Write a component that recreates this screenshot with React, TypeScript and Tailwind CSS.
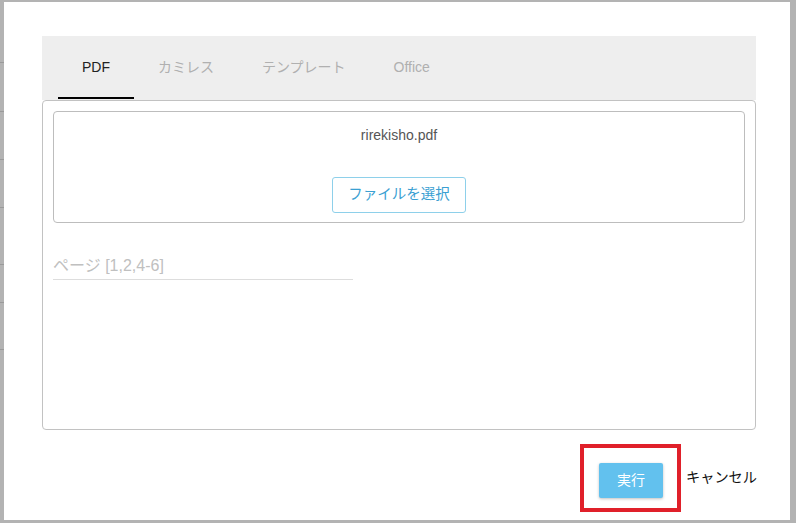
import React from "react";

const font = { fontFamily: '"Liberation Sans", "Noto Sans CJK JP", sans-serif' };

export default function App() {
  const tabs = [
    { label: "PDF", active: true },
    { label: "カミレス", active: false },
    { label: "テンプレート", active: false },
    { label: "Office", active: false },
  ];
  return (
    <div
      className="w-[796px] h-[523px] bg-[#b3b3b3] flex pt-[2px] pb-[3px]"
      style={font}
    >
      <div className="w-[4px] flex flex-col">
        <div className="h-[61px] border-b border-[#9a9a9a]" />
        <div className="h-[49px] border-b border-[#9a9a9a]" />
        <div className="h-[48px] border-b border-[#9a9a9a]" />
        <div className="h-[48px] border-b border-[#9a9a9a]" />
        <div className="h-[57px] border-b border-[#9a9a9a]" />
        <div className="h-[38px] border-b border-[#9a9a9a]" />
        <div className="h-[47px] border-b border-[#9a9a9a]" />
      </div>
      <div className="w-[786px] h-full bg-white pl-[38px] pr-[34px] pt-[34px] flex flex-col">
        <div className="h-[64px] bg-[#eeeeee] flex pl-[16px]">
          {tabs.map((t) => (
            <div
              key={t.label}
              className={
                "relative h-full flex items-center px-[24px] text-[14px] pb-[2px] " +
                (t.active ? "text-[#222222]" : "text-[#b0b0b0]")
              }
            >
              {t.label}
              {t.active && (
                <div className="absolute left-0 right-0 bottom-[1px] h-[2px] bg-black" />
              )}
            </div>
          ))}
        </div>
        <div className="h-[330px] border border-[#c2c2c2] rounded-[4px] px-[10px] pt-[10px]">
          <div className="h-[112px] border border-[#bdbdbd] rounded-[4px] flex flex-col items-center pt-[13px]">
            <div className="text-[14px] leading-[20px] text-[#555555]">rirekisho.pdf</div>
            <button className="mt-[32px] h-[36px] px-[15px] border border-[#8ed0ea] rounded-[3px] text-[#3aa0d2] text-[14.5px] bg-white">
              ファイルを選択
            </button>
          </div>
          <div className="mt-[28px] w-[300px] h-[29px] border-b border-[#dddddd] flex items-end pb-[3px] text-[16px] leading-[20px] text-[#c0c0c0]">
            ページ [1,2,4-6]
          </div>
        </div>
        <div className="mt-[14px] flex justify-end items-center mr-[-1px]">
          <div className="border-[4px] border-[#e0202a] pl-[15px] pr-[14px] pt-[15px] pb-[10px]">
            <button className="w-[64px] h-[35px] bg-[#62c1ee] rounded-[2px] text-white text-[14px] shadow-[0_1px_3px_rgba(0,0,0,0.25)]">
              実行
            </button>
          </div>
          <div className="ml-[5px] text-[14.2px] text-[#111111]">キャンセル</div>
        </div>
      </div>
    </div>
  );
}
